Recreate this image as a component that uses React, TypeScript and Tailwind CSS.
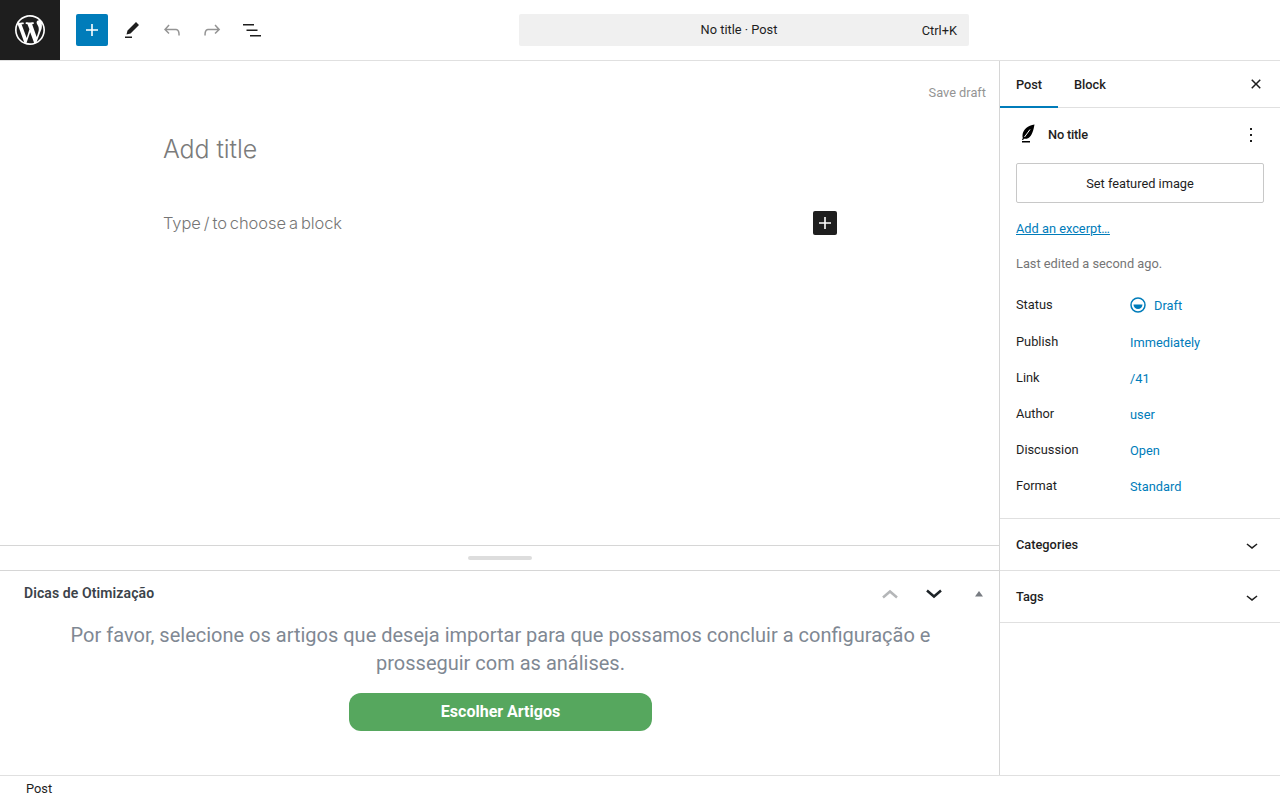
import type { ReactNode } from "react";

const Icon = ({ d, className = "" }: { d: string; className?: string }) => (
  <svg viewBox="0 0 24 24" width="24" height="24" fill="currentColor" className={className}>
    <path d={d} />
  </svg>
);

const ICONS = {
  plus: "M18 11.2h-5.2V6h-1.6v5.2H6v1.6h5.2V18h1.6v-5.2H18z",
  pencil: "m19 7-3-3-8.5 8.5-1 4 4-1L19 7Zm-7 11.5H5V20h7v-1.5Z",
  undo: "M18.3 11.7c-.6-.6-1.4-.9-2.3-.9H6.7l2.9-3.3-1.1-1-4.5 5L8.5 16l1-1-2.7-2.7H16c.5 0 .9.2 1.3.5 1 1 1 3.4 1 4.5v.3h1.5v-.2c0-1.5 0-4.3-1.5-5.7z",
  redo: "M15.6 6.5l-1.1 1 2.9 3.3H8c-.9 0-1.7.3-2.3.9-1.4 1.5-1.4 4.2-1.4 5.6v.2h1.5v-.3c0-1.1 0-3.5 1-4.5.3-.3.7-.5 1.3-.5h9.2L14.5 15l1.1 1.1 4.6-4.6-4.6-5z",
  list: "M3 6h11v1.5H3V6Zm3.5 5.5h11V13h-11v-1.5ZM21 17H10v1.5h11V17Z",
  close: "M12 13.06l3.712 3.713 1.061-1.06L13.061 12l3.712-3.712-1.06-1.06L12 10.938 8.288 7.227l-1.061 1.06L10.939 12l-3.712 3.712 1.06 1.061L12 13.061z",
  more: "M13 19h-2v-2h2v2zm0-6h-2v-2h2v2zm0-6h-2V5h2v2z",
  chevron: "M17.5 11.6L12 16l-5.5-4.4.9-1.2L12 14l4.6-3.6z",
};

const WP_LOGO =
  "M20 10c0-5.51-4.49-10-10-10C4.48 0 0 4.49 0 10c0 5.52 4.48 10 10 10 5.51 0 10-4.48 10-10zM7.78 15.37L4.37 6.22c.55-.02 1.17-.08 1.17-.08.5-.06.44-1.13-.06-1.11 0 0-1.45.11-2.37.11-.18 0-.37 0-.58-.01C4.12 2.69 6.87 1.11 10 1.11c2.33 0 4.45.87 6.05 2.34-.68-.11-1.65.39-1.65 1.58 0 .74.45 1.36.9 2.1.35.61.55 1.36.55 2.46 0 1.49-1.4 5-1.4 5l-3.03-8.37c.54-.02.82-.17.82-.17.5-.05.44-1.25-.06-1.22 0 0-1.44.12-2.38.12-.87 0-2.33-.12-2.33-.12-.5-.03-.56 1.2-.06 1.22l.92.08 1.26 3.41zM17.41 10c.24-.64.74-1.87.43-4.25.7 1.29 1.05 2.71 1.05 4.25 0 3.29-1.73 6.24-4.4 7.78.97-2.59 1.94-5.2 2.92-7.78zM6.1 18.09C3.12 16.65 1.11 13.53 1.11 10c0-1.3.23-2.48.72-3.59C3.25 10.3 4.67 14.2 6.1 18.09zm4.03-6.63l2.58 6.98c-.86.29-1.76.45-2.71.45-.79 0-1.57-.11-2.29-.33.81-2.38 1.62-4.74 2.42-7.1z";

const ToolButton = ({ d, muted }: { d: string; muted?: boolean }) => (
  <button className={`flex h-8 w-10 items-center justify-center ${muted ? "text-[#949494]" : "text-[#1e1e1e]"}`}>
    <Icon d={d} />
  </button>
);

const MetaRow = ({ label, children, h }: { label: string; children: ReactNode; h: string }) => (
  <div className={`flex items-center text-[12.8px] ${h}`}>
    <span className="w-[114px] -translate-y-px text-[#1e1e1e]">{label}</span>
    <span className="flex items-center text-[#007cba]">{children}</span>
  </div>
);

const Section = ({ title }: { title: string }) => (
  <div className="flex h-[52px] items-center justify-between border-b border-[#e0e0e0] pl-4 pr-4">
    <span className="text-[12.8px] font-medium text-[#1e1e1e]">{title}</span>
    <Icon d={ICONS.chevron} className="text-[#1e1e1e]" />
  </div>
);

export default function App() {
  return (
    <div className="flex h-screen flex-col overflow-hidden bg-white font-['Roboto',sans-serif]">
      {/* top bar */}
      <header className="flex h-[61px] shrink-0 items-center border-b border-[#e0e0e0]">
        <div className="flex h-[60px] w-[60px] items-center justify-center bg-[#1e1e1e] text-white">
          <svg viewBox="-2 -2 24 24" width="36" height="36" fill="currentColor">
            <path d={WP_LOGO} />
          </svg>
        </div>
        <button className="ml-4 mr-1 flex h-8 w-8 items-center justify-center rounded-[2px] bg-[#007cba] text-white">
          <Icon d={ICONS.plus} />
        </button>
        <ToolButton d={ICONS.pencil} />
        <ToolButton d={ICONS.undo} muted />
        <ToolButton d={ICONS.redo} muted />
        <ToolButton d={ICONS.list} />
        <div className="relative ml-[247px] flex h-8 w-[450px] items-center justify-center rounded-[2px] bg-[#f0f0f0] pr-[10px] text-[12.8px] text-[#1e1e1e]">
          <span>No title · Post</span>
          <span className="absolute right-3 translate-y-px text-[#1e1e1e]">Ctrl+K</span>
        </div>
      </header>

      <div className="flex min-h-0 flex-1">
        {/* editor column */}
        <main className="flex w-[1000px] shrink-0 flex-col border-r border-[#d6d6d6]">
          <div className="flex h-[484px] shrink-0 flex-col">
            <div className="flex justify-end pr-[13px] pt-6 text-[12.8px] leading-4 text-[#949494]">Save draft</div>
            <div className="pl-[163px] pr-[162px]">
              <h1 className="mt-7 text-[25px] font-light leading-[40px] tracking-[-0.1px] text-[#7b7b7b] font-['Inter',sans-serif]">
                Add title
              </h1>
              <div className="mt-[42px] flex h-6 items-center justify-between">
                <p className="text-[16.5px] font-light tracking-[-0.1px] [word-spacing:-1.5px] text-[#757575] font-['Inter',sans-serif]">
                  Type / to choose a block
                </p>
                <button className="flex h-6 w-6 items-center justify-center rounded-[2px] bg-[#1e1e1e] text-white">
                  <Icon d={ICONS.plus} />
                </button>
              </div>
            </div>
          </div>

          <div className="flex h-[26px] shrink-0 items-center justify-center border-y border-[#d6d6d6]">
            <span className="h-1 w-16 rounded-full bg-[#dddddd]" />
          </div>

          <section className="min-h-0 flex-1">
            <div className="flex h-[45px] items-center pl-6 pr-[14px]">
              <h2 className="-translate-y-px text-sm font-semibold tracking-[0.1px] text-[#3c434a]">Dicas de Otimização</h2>
              <div className="ml-auto flex items-center">
                <svg viewBox="0 0 24 24" width="24" height="24" className="mr-5 text-[#b4b6b8]" fill="none" stroke="currentColor" strokeWidth="2.5">
                  <path d="M5 15.500l7-6 7 6" />
                </svg>
                <svg viewBox="0 0 24 24" width="24" height="24" className="mr-[27px] text-[#1d2327]" fill="none" stroke="currentColor" strokeWidth="2.5">
                  <path d="M5 8.500l7 6 7-6" />
                </svg>
                <svg viewBox="0 0 12 12" width="12" height="12" className="text-[#787c82]" fill="currentColor">
                  <path d="M6 3L10 8.500H2z" />
                </svg>
              </div>
            </div>
            <div className="flex flex-col items-center pl-[26px] pr-6">
              <p className="mt-[5px] w-[880px] text-center text-[20px] leading-[28px] text-[#7f8893]">
                Por favor, selecione os artigos que deseja importar para que possamos concluir a configuração e prosseguir com as análises.
              </p>
              <button className="mt-4 h-[38px] w-[303px] rounded-xl bg-[#56a75e] text-base font-bold text-white">
                Escolher Artigos
              </button>
            </div>
          </section>
        </main>

        {/* settings sidebar */}
        <aside className="w-[280px] shrink-0">
          <div className="flex h-[47px] items-center border-b border-[#e0e0e0] pr-3 text-[12.8px] font-medium text-[#1e1e1e]">
            <div className="-mb-px flex h-[47px] w-[58px] items-center justify-center border-b-2 border-[#007cba] pt-[3px]">Post</div>
            <div className="flex h-full w-[64px] items-center justify-center pt-[2px]">Block</div>
            <Icon d={ICONS.close} className="ml-auto" />
          </div>

          <div className="border-b border-[#e0e0e0] px-4 pb-[13px]">
            <div className="flex h-[55px] items-center pb-px">
              <svg viewBox="0 0 24 24" width="24" height="24" className="text-black">
                <path fill="currentColor" d="M18.500 1.500C12 2.500 7 6.500 6.500 12c-.1 1.300 0 2.200.3 3L6 17h1.200l.6-1.300c1.500.3 3.200.1 4.700-.7 3.500-2 5-8 6-13.500Z" />
                <path stroke="white" strokeWidth="1" d="M8.500 14 14 6.500" />
                <path fill="currentColor" d="M6 18h8v1.500H6z" />
              </svg>
              <span className="ml-2 text-[12.8px] font-medium tracking-[-0.2px] text-[#1e1e1e]">No title</span>
              <Icon d={ICONS.more} className="ml-auto mr-px text-[#1e1e1e]" />
            </div>
            <button className="h-10 w-full rounded-[2px] border border-[#c8c8c8] pt-px text-[12.8px] text-[#1e1e1e]">
              Set featured image
            </button>
            <a className="mt-[17px] block text-[12.8px] leading-[18px] text-[#007cba] underline">Add an excerpt…</a>
            <p className="mt-[17px] text-[12.8px] leading-[18px] text-[#757575]">Last edited a second ago.</p>
            <div className="mt-[14px]">
              <MetaRow label="Status" h="h-[38px]">
                <svg viewBox="0 0 16 16" width="16" height="16" className="mr-2 -translate-y-px" fill="none">
                  <circle cx="8" cy="8" r="7" stroke="currentColor" strokeWidth="1.5" />
                  <path d="M3.500 7.500h9a4.500 4.500 0 0 1-9 0Z" fill="currentColor" />
                </svg>
                Draft
              </MetaRow>
              <MetaRow label="Publish" h="h-9">Immediately</MetaRow>
              <MetaRow label="Link" h="h-9">/41</MetaRow>
              <MetaRow label="Author" h="h-9">user</MetaRow>
              <MetaRow label="Discussion" h="h-9">Open</MetaRow>
              <MetaRow label="Format" h="h-9">Standard</MetaRow>
            </div>
          </div>
          <Section title="Categories" />
          <Section title="Tags" />
        </aside>
      </div>

      {/* footer breadcrumb */}
      <footer className="flex h-[25px] shrink-0 items-center border-t border-[#e0e0e0] pl-[26px] pt-px text-[12.8px] text-[#1e1e1e]">
        Post
      </footer>
    </div>
  );
}
